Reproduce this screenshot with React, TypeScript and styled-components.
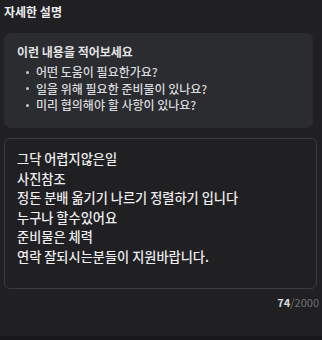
import React from "react";
import styled, { createGlobalStyle } from "styled-components";

const Global = createGlobalStyle`
  html, body {
    margin: 0;
    padding: 0;
    background: #202022;
  }
  body {
    font-family: "Noto Sans CJK KR", "Noto Sans", sans-serif;
    -webkit-font-smoothing: antialiased;
  }
`;

const Page = styled.div`
  width: 322px;
  height: 340px;
  box-sizing: border-box;
  display: flex;
  flex-direction: column;
  background: #202022;
`;

const Content = styled.div`
  flex: 1;
  display: flex;
  flex-direction: column;
  padding: 4px 3px 0 4px;
`;

const Title = styled.h2`
  margin: 0;
  font-size: 12px;
  line-height: 16px;
  font-weight: 700;
  color: #ececee;
`;

const HintBox = styled.div`
  margin: 13px 6px 0 0;
  padding: 10px 12px 14px 13px;
  background: #2b2c30;
  border-radius: 7px;
  box-sizing: border-box;
  height: 95px;
`;

const HintTitle = styled.div`
  font-size: 12px;
  line-height: 17px;
  font-weight: 700;
  color: #e2e3e5;
`;

const HintList = styled.ul`
  margin: 4px 0 0;
  padding: 0;
  list-style: none;
`;

const HintItem = styled.li`
  display: flex;
  align-items: center;
  font-size: 12px;
  line-height: 16.5px;
  font-weight: 500;
  color: #d9dadd;

  &::before {
    content: "";
    width: 3px;
    height: 3px;
    border-radius: 50%;
    background: #c8c9cc;
    margin: 0 7px 0 9px;
    flex: none;
  }
`;

const TextBox = styled.div`
  margin: 10px 2px 0 0;
  height: 151px;
  box-sizing: border-box;
  border: 1px solid #3a3b3f;
  border-radius: 6px;
  padding: 10px 12px;
  font-size: 13.2px;
  line-height: 19.6px;
  font-weight: 500;
  color: #ededef;
  white-space: pre-line;
`;

const Counter = styled.div`
  margin-top: 6px;
  text-align: right;
  font-size: 11px;
  line-height: 14px;
  color: #6f7075;
`;

const Count = styled.span`
  color: #d8d8da;
  font-weight: 700;
`;

const BottomStrip = styled.div`
  height: 4px;
  background: #18181a;
`;

const hints = [
  "어떤 도움이 필요한가요?",
  "일을 위해 필요한 준비물이 있나요?",
  "미리 협의해야 할 사항이 있나요?",
];

const body = `그닥 어렵지않은일
사진참조
정돈 분배 옮기기 나르기 정렬하기 입니다
누구나 할수있어요
준비물은 체력
연락 잘되시는분들이 지원바랍니다.`;

export default function App() {
  return (
    <Page>
      <Global />
      <Content>
        <Title>자세한 설명</Title>
        <HintBox>
          <HintTitle>이런 내용을 적어보세요</HintTitle>
          <HintList>
            {hints.map((h) => (
              <HintItem key={h}>{h}</HintItem>
            ))}
          </HintList>
        </HintBox>
        <TextBox>{body}</TextBox>
        <Counter>
          <Count>74</Count>/2000
        </Counter>
      </Content>
      <BottomStrip />
    </Page>
  );
}
